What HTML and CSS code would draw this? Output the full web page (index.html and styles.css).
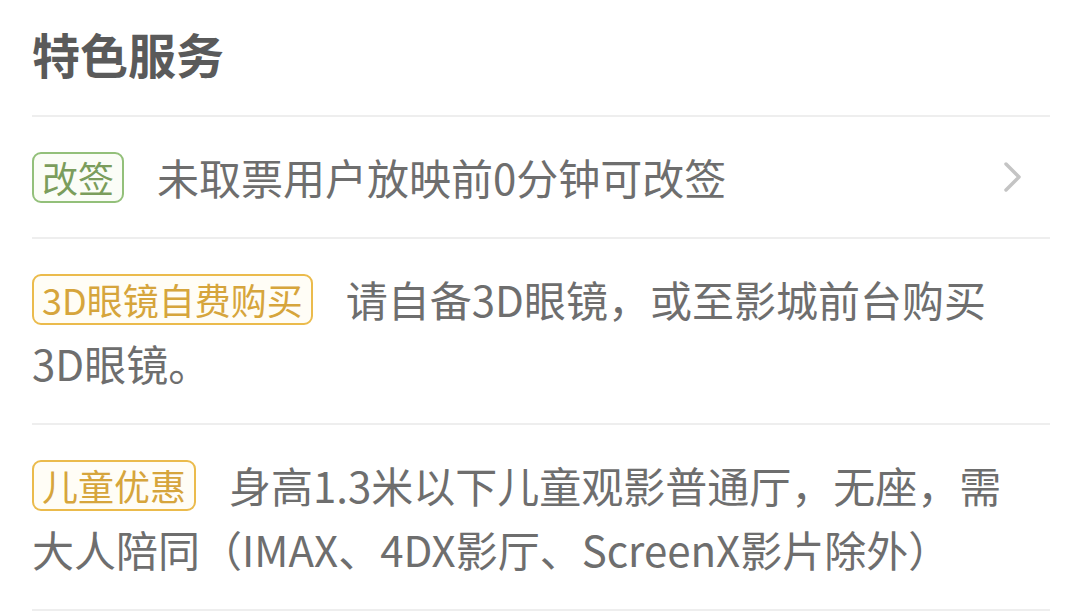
FILE: index.html
```html
<!DOCTYPE html>
<html lang="zh-CN">
<head>
    <meta charset="UTF-8">
    <meta name="viewport" content="width=device-width, initial-scale=1.0">
    <title>特色服务</title>
    <link rel="stylesheet" href="styles.css">
</head>
<body>
    <div class="container">
        <h2 class="title">特色服务</h2>
        <div class="service-item">
            <p class="service-text"><span class="tag tag-green">改签</span><span class="desc">未取票用户放映前0分钟可改签</span></p>
            <svg class="arrow" width="22" height="32" viewBox="0 0 22 32">
                <polyline points="4,3 17,16 4,29" fill="none" stroke="#c4c4c4" stroke-width="3.5" stroke-linecap="round" stroke-linejoin="round"/>
            </svg>
        </div>
        <div class="service-item">
            <p class="service-text"><span class="tag tag-orange">3D眼镜自费购买</span><span class="desc">请自备3D眼镜，或至影城前台购买3D眼镜。</span></p>
        </div>
        <div class="service-item">
            <p class="service-text"><span class="tag tag-orange">儿童优惠</span><span class="desc">身高1.3米以下儿童观影普通厅，无座，需大人陪同（IMAX、4DX影厅、ScreenX影片除外）</span></p>
        </div>
    </div>
</body>
</html>
```

FILE: styles.css
```css
body {
    margin: 0;
    background-color: #ffffff;
    font-family: "Noto Sans CJK SC", "Noto Sans", sans-serif;
}
.container {
    padding: 0 30px 0 32px;
}
.title {
    margin: 0;
    height: 117px;
    line-height: 106px;
    font-size: 48px;
    font-weight: bold;
    color: #5a5a5a;
    border-bottom: 2px solid #eeeeee;
    box-sizing: border-box;
}
.service-item {
    display: flex;
    align-items: center;
    padding: 28px 0;
    border-bottom: 2px solid #eeeeee;
}
.service-text {
    flex: 1;
    margin: 0;
    padding-right: 30px;
    font-size: 42px;
    line-height: 64px;
    color: #6e6e6e;
}
.tag {
    display: inline-block;
    font-size: 36px;
    line-height: 47px;
    padding: 0 8px;
    margin-right: 33px;
    border: 2px solid;
    border-radius: 9px;
    vertical-align: 2px;
}
.tag-green {
    color: #7b9d5c;
    border-color: #93c07a;
    background-color: #fbfdf7;
}
.tag-orange {
    color: #d6a53c;
    border-color: #ebbb4c;
    background-color: #fffdf6;
}
.arrow {
    margin-right: 26px;
}
```
